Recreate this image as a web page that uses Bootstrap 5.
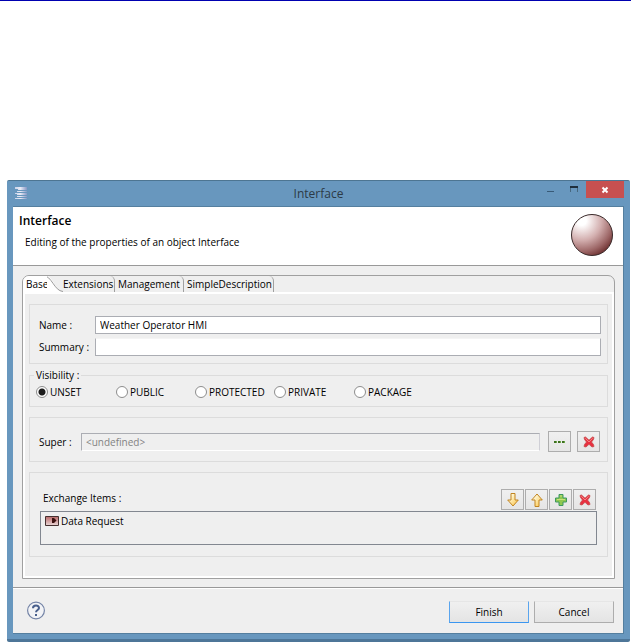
<!DOCTYPE html>
<html lang="en">
<head>
<meta charset="utf-8">
<meta name="viewport" content="width=device-width, initial-scale=1">
<title>Interface</title>
<link href="https://cdn.jsdelivr.net/npm/bootstrap@5.3.0/dist/css/bootstrap.min.css" rel="stylesheet">
<style>
body { font-family: "Open Sans", "Noto Sans", sans-serif; font-size: 10px; line-height: 16px; color: #000; background: #fff; }
.page-rule { height: 1px; background: #0000b0; }
.dialog-frame { margin: 179px 1px 0 7px; background: #6897be; border-top: 1px solid #4d7592; border-bottom: 3px solid #4e7698; border-radius: 2px; padding: 0 6px 5px; }
.title-bar { height: 26px; border-bottom: 1px solid #557f9f; }
.title-side { flex: 1 1 0; }
.app-icon { margin-left: 2px; }
.title-text { font-size: 12px; line-height: 26px; color: #2c3a46; }
.win-btn { border: 0; padding: 0; background: none; width: 24px; height: 17px; display: flex; justify-content: center; }
.win-close { width: 38px; background: #c75050; align-items: center; }
.dialog-body { background: #efefef; border-right: 1px solid #557f9f; border-bottom: 1px solid #557f9f; }
.head { height: 59px; background: #fff; border-bottom: 1px solid #999; padding: 5px 9px 0 6px; }
.head h1 { font-size: 12px; line-height: 18px; font-weight: 600; color: #000; margin: 0; }
.head p { margin: 3px 0 0 6px; line-height: 18px; }
.folder { margin: 9px 8px 8px 9px; border: 1px solid #a0a0a0; border-radius: 7px 7px 0 0; }
.tab-strip { height: 16px; }
.tab-strip button { border: 0; background: none; padding: 0; line-height: 16px; color: #000; font-size: 10px; text-align: left; white-space: nowrap; }
.tab-strip .plain { border-right: 1px solid #a0a0a0; border-top-right-radius: 5px; padding-left: 3px; }
.tab-strip .current { background: #fff; padding-left: 3px; width: 24px; border-top-left-radius: 6px; }
.tab-first { width: 52px; }
.tab-second { width: 69px; }
.tab-third { width: 90px; }
.folder-page { border: 2px solid #fff; padding: 10px 4px 19px 4px; }
.group-box { border: 1px solid #dcdcdc; margin-bottom: 10px; }
.group-fields { padding: 11px 6px 7px 8px; }
.group-fields label { width: 57px; padding-left: 1px; }
.line-input { height: 18px; border: 1px solid #abadb3; background: #fff; padding: 0 4px; font-size: 10px; line-height: 16px; color: #000; border-radius: 0; min-width: 0; }
.summary-input { border-top-color: #f4f4f4; }
.group-choice { padding: 0 6px 6px; margin-bottom: 10px; margin-top: -6px; min-width: 0; }
.group-choice legend { font-size: 10px; line-height: 14px; padding: 0 2px; margin: 0 0 2px -2px; width: auto; float: none; }
.choice { width: 79px; height: 16px; white-space: nowrap; }
.choice-wide { width: 80px; }
.choice input { appearance: none; flex: none; width: 12px; height: 12px; margin: 0 2px 0 0; border: 1px solid #8d8d8d; border-radius: 50%; background: #fff; }
.choice input:checked { background: radial-gradient(circle, #1c1c1c 0 3px, #fff 4px); }
.group-super { padding: 13px 7px 9px 8px; }
.group-super label { width: 43px; padding-left: 1px; }
.undefined-input { background: #efefef; border-color: #abadb3 #cfcfd6 #fff #abadb3; }
.undefined-input::placeholder { color: #838383; opacity: 1; }
.tool-btn { width: 23px; height: 21px; padding: 0; border: 1px solid #adadad; background: linear-gradient(#f0f0f0, #e5e5e5); display: flex; align-items: center; justify-content: center; }
.super-tools { gap: 6px; }
.tools { gap: 1px; margin-right: 1px; }
.group-items { padding: 16px 10px 11px 10px; margin-bottom: 0; }
.items-label { padding: 1px 0 0 3px; }
.item-list { height: 34px; border: 1px solid #828790; padding: 0 4px; margin-top: 1px; }
.item-row { gap: 2px; height: 18px; }
.foot { border-top: 1px solid #999; box-shadow: inset 0 1px #fff; padding: 13px 9px 10px 13px; gap: 5px; }
.push-btn { width: 80px; height: 22px; border: 1px solid #adadad; border-top-color: #e6e6e6; background: linear-gradient(#f0f0f0, #e4e4e4); padding: 0; font-size: 10px; line-height: 18px; color: #000; }
.push-default { border-color: #e6e6e6 #5aa5ee #3a96f0; }
.help-btn { border: 0; padding: 0; background: none; line-height: 0; }
</style>
<script src="https://cdn.jsdelivr.net/npm/bootstrap@5.3.0/dist/js/bootstrap.bundle.min.js"></script>
</head>
<body>
<svg class="d-none" aria-hidden="true">
  <defs>
    <symbol id="delete" viewBox="0 0 12 12">
      <path d="M1 1.500 2.500 1 6 4.200 9.500 1 11 1.500 10.500 3.500 8.500 6 10.500 8.500 11 10.500 9 11 6 8.300 3 11 1 10.500 1.500 8.500 3.500 6 1.500 3.500Z" fill="#e83040" stroke="#c44b4b" stroke-width=".8"/>
      <path d="M2.300 2.300 6 6M9.700 2.300 6 6" stroke="#f58080" stroke-width="1"/>
    </symbol>
  </defs>
</svg>
<div class="page-rule"></div>
<main class="dialog-frame">
  <header class="title-bar d-flex align-items-start">
    <div class="title-side d-flex">
      <svg class="app-icon mt-1" width="14" height="16" viewBox="0 0 14 16" role="img" aria-label="Application">
        <defs><linearGradient id="bars" gradientUnits="userSpaceOnUse" x1="0" x2="12" y1="0" y2="0"><stop stop-color="#c9d2e8"/><stop offset=".45" stop-color="#e8ebf6"/><stop offset="1" stop-color="#8697c4"/></linearGradient></defs>
        <path d="M0 2H12V5H3V4H0ZM2 6H12V7H2ZM0 8H12V10H2V9H0ZM2 11H12V12H2ZM0 13H12V14H0Z" fill="url(#bars)"/>
      </svg>
    </div>
    <div class="title-text">Interface</div>
    <div class="title-side d-flex justify-content-end">
      <button class="win-btn" type="button" aria-label="Minimize"><svg width="8" height="17"><path d="M1 10.500H8" stroke="#385a77"/></svg></button>
      <button class="win-btn" type="button" aria-label="Maximize"><svg width="10" height="17"><path d="M1.500 11V6M8.500 11V6" stroke="#47687f" fill="none"/><path d="M1 6H9" stroke="#1f2f3c" stroke-width="2"/></svg></button>
      <button class="win-btn win-close" type="button" aria-label="Close"><svg width="8" height="8"><path d="M1.500 1.500 6.500 6.500M6.500 1.500 1.500 6.500" stroke="#fff" stroke-width="2"/></svg></button>
    </div>
  </header>
  <div class="dialog-body">
    <section class="head d-flex justify-content-between align-items-start">
      <div><h1>Interface</h1><p>Editing of the properties of an object Interface</p></div>
      <svg class="ms-2" width="44" height="44" viewBox="0 0 44 44" role="img" aria-label="Interface object">
        <defs><radialGradient id="ball" cx=".25" cy=".15" r=".95"><stop offset="0" stop-color="#fff"/><stop offset=".12" stop-color="#fff"/><stop offset=".5" stop-color="#d3afaf"/><stop offset=".8" stop-color="#9b6464"/><stop offset="1" stop-color="#682b2b"/></radialGradient></defs>
        <circle cx="22" cy="23" r="20.500" fill="url(#ball)" stroke="#3a2a2a" stroke-width="1"/>
      </svg>
    </section>
    <section class="folder">
      <div class="tab-strip d-flex" role="tablist">
        <button class="current" type="button" role="tab" aria-selected="true">Base</button>
        <svg class="flex-shrink-0" width="16" height="16" viewBox="0 0 16 16" aria-hidden="true"><path d="M0 0C6 1 8 14 16 16H0Z" fill="#fff"/><path d="M-4 -.5C5 -.5 7 15 16 15.500" fill="none" stroke="#999"/></svg>
        <button class="plain tab-first ps-0" type="button" role="tab" aria-selected="false">Extensions</button>
        <button class="plain tab-second" type="button" role="tab" aria-selected="false">Management</button>
        <button class="plain tab-third" type="button" role="tab" aria-selected="false">SimpleDescription</button>
      </div>
      <div class="folder-page">
        <div class="group-box group-fields">
          <div class="d-flex align-items-center"><label for="name">Name :</label><input class="line-input flex-fill" id="name" type="text" value="Weather Operator HMI"></div>
          <div class="d-flex align-items-center mt-1"><label for="summary">Summary :</label><input class="line-input summary-input flex-fill" id="summary" type="text"></div>
        </div>
        <fieldset class="group-box group-choice">
          <legend>Visibility :</legend>
          <div class="d-flex">
            <label class="choice choice-wide d-flex align-items-center"><input type="radio" name="visibility" checked>UNSET</label>
            <label class="choice d-flex align-items-center"><input type="radio" name="visibility">PUBLIC</label>
            <label class="choice d-flex align-items-center"><input type="radio" name="visibility">PROTECTED</label>
            <label class="choice choice-wide d-flex align-items-center"><input type="radio" name="visibility">PRIVATE</label>
            <label class="choice d-flex align-items-center"><input type="radio" name="visibility">PACKAGE</label>
          </div>
        </fieldset>
        <div class="group-box group-super d-flex align-items-center">
          <label for="super">Super :</label>
          <input class="line-input undefined-input flex-fill" id="super" type="text" placeholder="&lt;undefined&gt;" readonly>
          <div class="super-tools d-flex ms-2">
            <button class="tool-btn" type="button" aria-label="Browse"><svg width="13" height="12"><path d="M1 5h3v2H1zM5 5h3v2H5zM9 5h3v2H9z" fill="#6aa544"/><path d="M1 6h2M5 6h2M9 6h2" stroke="#3d7020" stroke-width="2"/></svg></button>
            <button class="tool-btn" type="button" aria-label="Clear"><svg width="12" height="12"><use href="#delete"/></svg></button>
          </div>
        </div>
        <div class="group-box group-items">
          <div class="d-flex align-items-start">
            <div class="items-label flex-fill" id="items-label">Exchange Items :</div>
            <div class="tools d-flex">
              <button class="tool-btn" type="button" aria-label="Move down"><svg width="12" height="14"><defs><linearGradient id="golddown" x1="0" y1="0" x2="1" y2="1"><stop offset=".2" stop-color="#fffbe0"/><stop offset="1" stop-color="#fbc03c"/></linearGradient></defs><path d="M4 .500H8V7H11.300L6 13 .700 7H4Z" fill="url(#golddown)" stroke="#c18420"/></svg></button>
              <button class="tool-btn" type="button" aria-label="Move up"><svg width="12" height="14"><defs><linearGradient id="goldup" x1="0" y1="0" x2="1" y2="1"><stop offset=".2" stop-color="#fffbe0"/><stop offset="1" stop-color="#fbc03c"/></linearGradient></defs><path d="M4 13.500H8V7H11.300L6 1 .700 7H4Z" fill="url(#goldup)" stroke="#c18420"/></svg></button>
              <button class="tool-btn" type="button" aria-label="Add"><svg width="12" height="12"><path d="M4 .500H8V4H11.500V8H8V11.500H4V8H.500V4H4Z" fill="#8fc850" stroke="#3c9860"/><path d="M5 2H7M2 5.500H10" stroke="#c9e27c"/></svg></button>
              <button class="tool-btn" type="button" aria-label="Remove"><svg width="12" height="12"><use href="#delete"/></svg></button>
            </div>
          </div>
          <div class="item-list" role="listbox" aria-labelledby="items-label">
            <div class="item-row d-flex align-items-center" role="option">
              <svg width="14" height="10" aria-hidden="true"><defs><linearGradient id="item" x2="0" y2="1"><stop stop-color="#b86868"/><stop offset="1" stop-color="#ead8d8"/></linearGradient></defs><path d="M.5.5H13.500V9.500H.500Z" fill="url(#item)" stroke="#453030"/><path d="M7 2H9L11.500 4.500 9 7H7Z" fill="#3a1010"/></svg>
              <span>Data Request</span>
            </div>
          </div>
        </div>
      </div>
    </section>
    <footer class="foot d-flex align-items-start">
      <button class="help-btn" type="button" aria-label="Help"><svg width="20" height="19" viewBox="0 0 20 19"><circle cx="10" cy="9.500" r="8.400" fill="#f2f3f6" stroke="#7484a6" stroke-width="1.200"/><path d="M7 7.200C7 3.600 13 3.600 13 7 13 9 10 9 10 11.300" fill="none" stroke="#485f8c" stroke-width="2"/><path d="M9 13h2v2H9z" fill="#485f8c"/></svg></button>
      <button class="push-btn push-default ms-auto" type="button">Finish</button>
      <button class="push-btn" type="button">Cancel</button>
    </footer>
  </div>
</main>
</body>
</html>
